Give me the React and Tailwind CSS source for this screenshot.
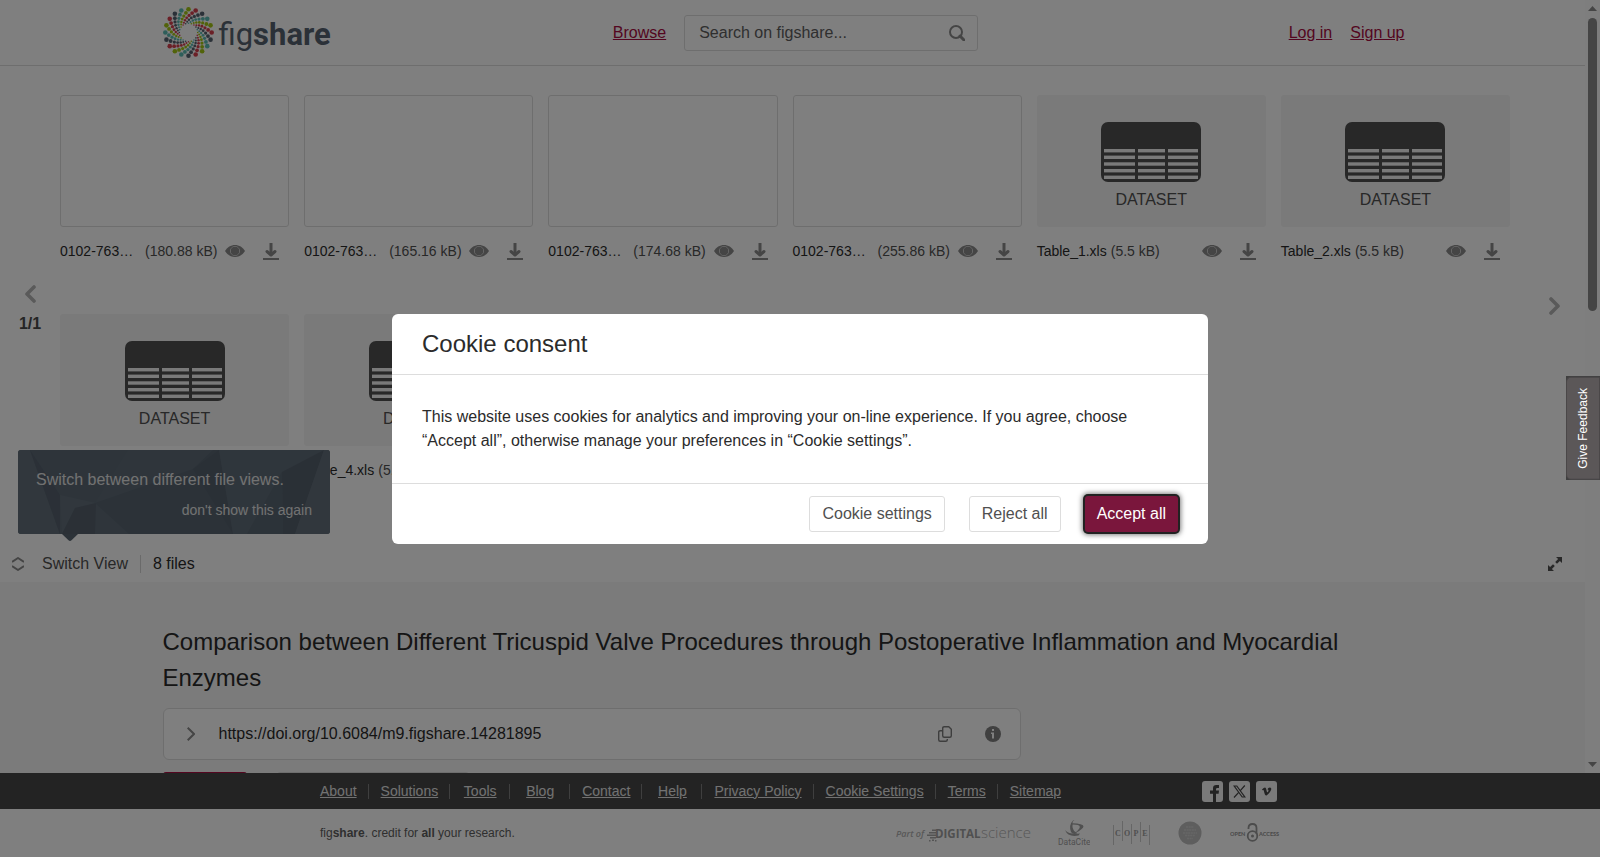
import React from "react";

const files = [
  { id: 1, name: "0102-763…", size: "180.88 kB" },
  { id: 2, name: "0102-763…", size: "165.16 kB" },
  { id: 3, name: "0102-763…", size: "174.68 kB" },
  { id: 4, name: "0102-763…", size: "255.86 kB" },
  { id: 5, name: "Table_1.xls", size: "5.5 kB", dataset: true },
  { id: 6, name: "Table_2.xls", size: "5.5 kB", dataset: true },
  { id: 7, name: "Table_3.xls", size: "5.5 kB", dataset: true },
  { id: 8, name: "Table_4.xls", size: "5.5 kB", dataset: true },
];

const footerLinks = [
  "About",
  "Solutions",
  "Tools",
  "Blog",
  "Contact",
  "Help",
  "Privacy Policy",
  "Cookie Settings",
  "Terms",
  "Sitemap",
];

const dotColors = ["#a4c614", "#d6404f", "#566270", "#5cbcb4"];
const dotRings = [
  { r: 23.2, twist: 0, size: 2.3 },
  { r: 19.8, twist: 7.5, size: 1.9 },
  { r: 17.1, twist: 16, size: 1.6 },
  { r: 14.8, twist: 25, size: 1.4 },
  { r: 12.7, twist: 34, size: 1.2 },
  { r: 10.8, twist: 43, size: 1 },
  { r: 9.2, twist: 54, size: 0.8 },
];

function SpiralMark() {
  const dots = [];
  for (let arm = 0; arm < 20; arm++) {
    for (const ring of dotRings) {
      const angle = ((arm * 18 - 90 - ring.twist) * Math.PI) / 180;
      dots.push(
        <circle
          key={arm + "-" + ring.r}
          cx={25.5 + ring.r * Math.cos(angle)}
          cy={25.5 + ring.r * Math.sin(angle)}
          r={ring.size}
          fill={dotColors[arm % 4]}
        />
      );
    }
  }
  return (
    <svg className="h-[51px] w-[51px]" viewBox="0 0 51 51" aria-hidden="true">
      {dots}
    </svg>
  );
}

function SearchIcon() {
  return (
    <svg className="h-4 w-4" viewBox="0 0 16 16" fill="none" stroke="#8a8a8a" strokeWidth="2" aria-hidden="true">
      <circle cx="7" cy="7" r="6" />
      <path d="M11 11l4 4" strokeWidth="3" strokeLinecap="round" />
    </svg>
  );
}

function DatasetIcon() {
  const rows = [27, 33.6, 40.3, 47, 53.6];
  return (
    <svg className="h-[60px] w-[100px]" viewBox="0 0 100 60" aria-hidden="true">
      <rect width="100" height="60" rx="7" fill="#505050" />
      {rows.map((y) => (
        <g key={y} fill="#f4f4f4">
          <rect x="3" y={y} width="31" height="3.4" />
          <rect x="37" y={y} width="27" height="3.4" />
          <rect x="67" y={y} width="30" height="3.4" />
        </g>
      ))}
    </svg>
  );
}

function EyeIcon() {
  return (
    <svg className="h-3 w-5" viewBox="0 0 20 12" aria-hidden="true">
      <path d="M0 6C2.2 2.3 5.800 0 10 0s7.800 2.300 10 6c-2.200 3.700-5.800 6-10 6S2.200 9.700 0 6z" fill="#8a8a8a" />
      <circle cx="10" cy="6" r="4.600" fill="none" stroke="#e4e4e4" strokeWidth=".8" />
      <circle cx="10" cy="6" r="4.200" fill="#8a8a8a" />
    </svg>
  );
}

function DownloadIcon() {
  return (
    <svg className="h-[17px] w-4" viewBox="0 0 16 17" fill="none" stroke="#8a8a8a" aria-hidden="true">
      <path d="M8 0v11.500" strokeWidth="3" />
      <path d="M4 8.500L8 12l4-3.500" strokeWidth="3" strokeLinecap="round" strokeLinejoin="round" />
      <path d="M0 16h16" strokeWidth="2" />
    </svg>
  );
}

function Chevron({ left }) {
  return (
    <svg className="h-[18px] w-3" viewBox="0 0 12 18" fill="none" stroke="#b4b4b4" strokeWidth="3.600" strokeLinecap="round" strokeLinejoin="round" aria-hidden="true">
      <path d={left ? "M10 2L3 9l7 7" : "M2 2l7 7-7 7"} />
    </svg>
  );
}

function FileCard({ file }) {
  return (
    <li className="min-w-0">
      {file.dataset ? (
        <div className="flex h-[132px] flex-col items-center rounded-[3px] bg-[#f4f4f4] pt-[27px]">
          <DatasetIcon />
          <span className="mt-1.5 text-base text-[#505050]">DATASET</span>
        </div>
      ) : (
        <div className="h-[132px] rounded-[3px] border border-[#dddddd]" />
      )}
      <div className="flex h-12 items-center pr-2.5 text-sm whitespace-nowrap">
        <span className={file.dataset ? "mr-1 text-[#2b2b2b]" : "w-[85px] shrink-0 text-[#2b2b2b]"}>{file.name}</span>
        <span className="text-[#505050]">({file.size})</span>
        <button type="button" aria-label={"Preview " + file.name} className="ml-auto">
          <EyeIcon />
        </button>
        <button type="button" aria-label={"Download " + file.name} className="ml-[18px]">
          <DownloadIcon />
        </button>
      </div>
    </li>
  );
}

function Header() {
  return (
    <header className="border-b border-[#dcdcdc]">
      <div className="mx-auto flex h-[65px] max-w-[1260px] items-center">
        <div className="flex flex-1 items-center">
          <a href="#" aria-label="figshare" className="flex items-center gap-[5px] font-[Roboto,sans-serif] text-[31px] leading-none text-[#566270]">
            <SpiralMark />
            <span className="pt-1">
              fig<b className="font-bold">share</b>
            </span>
          </a>
        </div>
        <div className="flex items-center gap-[18px] pl-6">
          <a href="#" className="text-[#a80c41] underline">Browse</a>
          <label className="flex h-9 w-[294px] items-center rounded-[3px] border border-[#dddddd] pr-3 pl-3.5">
            <input aria-label="Search on figshare" placeholder="Search on figshare..." className="min-w-0 flex-1 text-base text-[#5e5e5e] outline-none placeholder:text-[#5e5e5e]" />
            <SearchIcon />
          </label>
        </div>
        <nav className="flex flex-1 justify-end gap-[18px] pr-[18px]">
          <a href="#" className="text-[#a80c41] underline">Log in</a>
          <a href="#" className="text-[#a80c41] underline">Sign up</a>
        </nav>
      </div>
    </header>
  );
}

function ViewTip() {
  return (
    <div className="absolute bottom-[41px] left-[18px] w-[312px]">
      <div className="relative overflow-hidden rounded-[3px] bg-[#5e6b77] px-[18px] pt-[17px] pb-3">
        <svg className="absolute inset-0 h-full w-full" viewBox="0 0 312 84" preserveAspectRatio="none" aria-hidden="true">
          <path d="M0 0h12l30 84H0z" fill="#626f7b" />
          <path d="M12 0h98L77 53 42 45v39z" fill="#5c6975" />
          <path d="M12 0l30 45v39z" fill="#56616e" />
          <path d="M42 45l36 8-21 5-13 26z" fill="#626f7a" />
          <path d="M57 58l21-5-1 31H44z" fill="#56606d" />
          <path d="M77 53L175 19 195 0h6l14 84H111z" fill="#586571" />
          <path d="M175 19L201 0l14 84z" fill="#55606d" />
          <path d="M201 0h111l-48 22-35 62h-14z" fill="#5f6c78" />
          <path d="M264 22L306 0l-29 84h-12z" fill="#55606d" />
          <path d="M264 22l-35 62h36z" fill="#596672" />
          <path d="M306 0h6v84h-35z" fill="#636f7b" />
        </svg>
        <p className="relative leading-[26px] text-[#e4e4e4]">Switch between different file views.</p>
        <button type="button" className="relative mt-[5px] ml-auto block text-sm leading-6 text-[#e4e4e4]">don't show this again</button>
      </div>
      <svg className="ml-11 block h-[7px] w-4" viewBox="0 0 16 7" aria-hidden="true">
        <path d="M0 0h16L9.500 6.300Q8 7.500 6.500 6.300z" fill="#586571" />
      </svg>
    </div>
  );
}

function FileViewer() {
  return (
    <section className="relative">
      <div className="flex">
        <div className="flex w-[60px] shrink-0 flex-col items-center justify-center gap-[9px] pt-[9px] text-[#4a4a4a]">
          <button type="button" aria-label="Previous page">
            <Chevron left />
          </button>
          <b>1/1</b>
        </div>
        <ul className="grid min-w-0 flex-1 grid-cols-6 gap-x-[15px] gap-y-[39px] pt-[29px] pb-[52px]">
          {files.map((file) => (
            <FileCard key={file.id} file={file} />
          ))}
        </ul>
        <div className="flex w-[75px] shrink-0 items-center justify-end pr-6">
          <button type="button" aria-label="Next page">
            <Chevron />
          </button>
        </div>
      </div>
      <div className="flex h-9 items-center pr-[23px] pl-3">
        <button type="button" className="flex items-center gap-[18px] text-[#505050]">
          <svg className="h-3.5 w-3" viewBox="0 0 12 14" fill="none" stroke="#8a8a8a" strokeWidth="2" strokeLinejoin="round" aria-hidden="true">
            <path d="M0 5l6-4 6 4M0 9l6 4 6-4" />
          </svg>
          Switch View
        </button>
        <span className="ml-3 border-l border-[#d4d4d4] pl-3 leading-[18px] text-[#2b2b2b]">8 files</span>
        <button type="button" aria-label="Full screen" className="ml-auto">
          <svg className="h-3.5 w-3.5" viewBox="0 0 14 14" fill="#505050" aria-hidden="true">
            <path d="M8 0h6v6l-2.100-2.100L9 6.800 7.200 5l2.900-2.900zM0 8l2.100 2.100L5 7.200 6.800 9l-2.900 2.900L6 14H0z" />
          </svg>
        </button>
      </div>
      <ViewTip />
    </section>
  );
}

function ItemDetails() {
  return (
    <section className="flex-1 bg-[#f6f6f6] pt-[42px]">
      <div className="mx-auto max-w-[1260px]">
        <h1 className="text-2xl leading-9 text-[#2b2b2b]">
          Comparison between Different Tricuspid Valve Procedures through Postoperative Inflammation and Myocardial Enzymes
        </h1>
        <div className="mt-3 flex h-[52px] max-w-[858px] items-center rounded-[6px] border border-[#dddddd] bg-white pr-[19px] pl-[23px]">
          <button type="button" aria-label="Show citation">
            <svg className="h-3.5 w-2" viewBox="0 0 8 14" fill="none" stroke="#8a8a8a" strokeWidth="2" aria-hidden="true">
              <path d="M.7.700L7 7 .7 13.300" />
            </svg>
          </button>
          <span className="ml-6 text-[#2b2b2b]">https://doi.org/10.6084/m9.figshare.14281895</span>
          <button type="button" aria-label="Copy" className="ml-auto">
            <svg className="h-4 w-3.5" viewBox="0 0 14 16" fill="none" stroke="#7c7c7c" strokeWidth="1.400" strokeLinejoin="round" aria-hidden="true">
              <path d="M6.200.7h4.600l2.500 2.500v6.600q0 1.500-1.500 1.500H6.200q-1.500 0-1.500-1.500V2.200Q4.700.7 6.200.7z" />
              <path d="M4.700 4.700H2.200Q.7 4.700.7 6.200v7.600q0 1.500 1.500 1.500h5.600q1.500 0 1.500-1.500v-.8" />
            </svg>
          </button>
          <button type="button" aria-label="Information" className="ml-[33px]">
            <svg className="h-4 w-4" viewBox="0 0 16 16" aria-hidden="true">
              <circle cx="8" cy="8" r="8" fill="#808080" />
              <path d="M7 3h2v2H7zM6 6.500h3v6H7V8H6z" fill="#ffffff" />
            </svg>
          </button>
        </div>
        <div className="mt-3 flex gap-[30px]">
          <button type="button" aria-label="Cite" className="h-9 w-[84px] rounded-[3px] bg-[#a80c41]" />
          <button type="button" aria-label="Download all" className="h-9 w-[192px] rounded-[3px] border border-[#dddddd]" />
        </div>
      </div>
    </section>
  );
}

function ScrollTrack() {
  return (
    <div className="flex w-[15px] shrink-0 flex-col items-center bg-[#fcfcfc] py-1.5" aria-hidden="true">
      <svg className="h-[5px] w-[9px]" viewBox="0 0 9 5" fill="#8a8a8a">
        <path d="M4.500 0L9 5H0z" />
      </svg>
      <div className="mt-[7px] h-[293px] w-[9px] rounded-full bg-[#8a8a8a]" />
      <svg className="mt-auto h-[5px] w-[9px]" viewBox="0 0 9 5" fill="#8a8a8a">
        <path d="M0 0h9L4.500 5z" />
      </svg>
    </div>
  );
}

function SocialLinks() {
  return (
    <div className="mr-[3px] ml-auto flex gap-1.5">
      <a href="#" aria-label="Facebook">
        <svg className="h-[21px] w-[21px]" viewBox="0 0 21 21" aria-hidden="true">
          <rect width="21" height="21" rx="3" fill="#f4f4f4" />
          <path d="M11 21v-8.200H8V9.500h3V7.300Q11 4 14.300 4H17v3h-1.700q-1.300 0-1.300 1.300v1.200h3l-.4 3.300H14V21z" fill="#464646" />
        </svg>
      </a>
      <a href="#" aria-label="X">
        <svg className="h-[21px] w-[21px]" viewBox="0 0 21 21" aria-hidden="true">
          <rect width="21" height="21" rx="3" fill="#f4f4f4" />
          <g fill="none" stroke="#464646" strokeWidth="1.200">
            <path d="M5.200 5h2.600l8 11h-2.600z" />
            <path d="M15.800 4.500l-4.700 5.300M9.700 11.300L5 16.500" />
          </g>
        </svg>
      </a>
      <a href="#" aria-label="Vimeo">
        <svg className="h-[21px] w-[21px]" viewBox="0 0 21 21" aria-hidden="true">
          <rect width="21" height="21" rx="3" fill="#f4f4f4" />
          <path d="M6 8.500C7.200 7.400 8.200 6.600 9 6.600c1.500 0 1.500 4.700 2.400 4.700.5 0 1.100-1.300 1.100-1.900 0-.8-.6-.9-1.100-.7.500-1.500 1.600-2.200 2.600-2.100 3 .300 0 5.400-3.500 7.900-2.200.5-2.300-5.500-3.200-5.500L6.500 9.300z" fill="#464646" />
        </svg>
      </a>
    </div>
  );
}

function PartnerLogos() {
  return (
    <div className="flex items-center">
      <svg className="h-6 w-[138px]" viewBox="0 0 138 24" fill="#b0b0b0" aria-label="Part of Digital Science" role="img">
        <text x="0" y="16" fontFamily="Open Sans, sans-serif" fontSize="9" fontStyle="italic" fontWeight="600">Part of</text>
        <path d="M36 8.500h4V10h-4zM33 11h7v1.500h-7zM31 13.500h9V15h-9zM34 16h6v1.500h-6zM36 18.500h2V20h-2zM39 19h1.500v1.500H39zM33 19h1.500v1.500H33z" fill="#a8a8a8" />
        <text x="39" y="17" fontFamily="Open Sans, sans-serif" fontSize="11.500" fontWeight="700" fill="#a0a0a0">DIGITAL</text>
        <text x="85" y="17" fontFamily="Open Sans, sans-serif" fontSize="15" fontWeight="300">science</text>
      </svg>
      <svg className="ml-6 h-[26px] w-8" viewBox="0 0 32 26" fill="#a0a0a0" aria-label="DataCite" role="img">
        <path d="M15 .5l1.500-.5q-2.300 1.500-2 3.200Q25 3.500 25.500 6.200q0 2.800-8.500 6.800 5-4.200 4.800-6.300Q21.500 4.600 14.700 4.600q-.9 2.600 1.400 6.400l3.400 2.200q-4.500 1.800-6.500-1.200-2.500-7 2-11.500z" />
        <path d="M7 10q4.500 5 15 3.500l-1.500 2Q10 17.500 7 10z" />
        <text x="0" y="24.500" fontFamily="Roboto, sans-serif" fontSize="8.500">DataCite</text>
      </svg>
      <svg className="ml-[23px] h-6 w-[37px]" viewBox="0 0 37 24" aria-label="COPE" role="img">
        <path d="M.5 4v20M9.500 0v20M18.500 3v20M27.500 1v20M36.500 4v20" stroke="#cccccc" strokeWidth="1" />
        <g fontFamily="Liberation Serif, serif" fontSize="8" fontWeight="700" fill="#a0a0a0" textAnchor="middle">
          <text x="5" y="15">C</text>
          <text x="14" y="15">O</text>
          <text x="23" y="15">P</text>
          <text x="32" y="15">E</text>
        </g>
      </svg>
      <svg className="ml-7 h-6 w-6" viewBox="0 0 24 24" aria-hidden="true">
        <circle cx="12" cy="12" r="11.500" fill="#bcbcbc" />
        <path d="M8 6h8M6 9h12M5 12h14M7 14.500h10M9 17.500h6" stroke="#cdcdcd" strokeWidth="1.400" strokeDasharray="2 .6" />
      </svg>
      <svg className="ml-7 h-5 w-[50px]" viewBox="0 0 50 20" aria-label="Open Access" role="img">
        <text x="0" y="13" fontFamily="Lato, sans-serif" fontSize="5.500" fontWeight="900" fill="#989898">OPEN</text>
        <text x="29" y="13" fontFamily="Lato, sans-serif" fontSize="5.500" fontWeight="900" fill="#989898">ACCESS</text>
        <g fill="none" stroke="#989898" strokeWidth="1.800">
          <circle cx="22.500" cy="13" r="4.800" />
          <path d="M18.500 6V5q0-4 4-4t4 4v6" />
        </g>
        <circle cx="22.500" cy="13" r="1.500" fill="#989898" />
      </svg>
    </div>
  );
}

function Footer() {
  return (
    <footer>
      <div className="bg-[#464646]">
        <div className="mx-auto flex h-9 max-w-[960px] items-center">
          <nav className="-ml-3 flex text-sm">
            {footerLinks.map((label) => (
              <span key={label} className="min-w-[60px] border-r border-[#7e7e7e] pr-[11px] pl-3 text-center leading-[15px] last:border-r-0">
                <a href="#" className="text-[#e4e4e4] underline">{label}</a>
              </span>
            ))}
          </nav>
          <SocialLinks />
        </div>
      </div>
      <div className="bg-white">
        <div className="mx-auto flex h-12 max-w-[960px] items-center justify-between">
          <p className="text-xs text-[#5e5e5e]">
            fig<b>share</b>. credit for <b>all</b> your research.
          </p>
          <PartnerLogos />
        </div>
      </div>
    </footer>
  );
}

function CookieDialog() {
  return (
    <div className="fixed inset-0 flex items-center justify-center bg-black/50">
      <div role="dialog" aria-modal="true" aria-labelledby="cookie-title" className="w-full max-w-[816px] rounded-[6px] bg-white">
        <h2 id="cookie-title" className="border-b border-[#dddddd] px-[30px] text-2xl leading-[60px] text-[#2b2b2b]">Cookie consent</h2>
        <p className="px-[30px] py-[30px] leading-6 text-[#2b2b2b]">
          This website uses cookies for analytics and improving your on-line experience. If you agree, choose “Accept all”, otherwise manage your preferences in “Cookie settings”.
        </p>
        <div className="flex justify-end gap-6 border-t border-[#dddddd] px-[30px] py-3">
          <button type="button" className="h-9 rounded-[3px] border border-[#dddddd] px-3 text-[#505050]">Cookie settings</button>
          <button type="button" className="h-9 rounded-[3px] border border-[#dddddd] px-3 text-[#505050]">Reject all</button>
          <button type="button" className="h-9 rounded-[3px] bg-[#7a163c] px-3 text-white shadow-[0_0_0_2px_#222222,0_0_5px_3px_#00000080]">Accept all</button>
        </div>
      </div>
    </div>
  );
}

function FeedbackTab() {
  return (
    <div className="fixed inset-y-0 right-0 flex items-center">
      <button type="button" className="rotate-180 rounded-r-[5px] border border-[#4a4748] bg-[#5b5758] px-2.5 py-2 text-xs leading-4 text-white [writing-mode:vertical-rl]">
        Give Feedback
      </button>
    </div>
  );
}

export default function App() {
  return (
    <div className="flex h-screen flex-col bg-white font-['Liberation_Sans',Arial,sans-serif] text-base text-[#2b2b2b]">
      <div className="flex min-h-0 flex-1">
        <div className="flex min-w-0 flex-1 flex-col overflow-hidden">
          <Header />
          <FileViewer />
          <ItemDetails />
        </div>
        <ScrollTrack />
      </div>
      <Footer />
      <CookieDialog />
      <FeedbackTab />
    </div>
  );
}
